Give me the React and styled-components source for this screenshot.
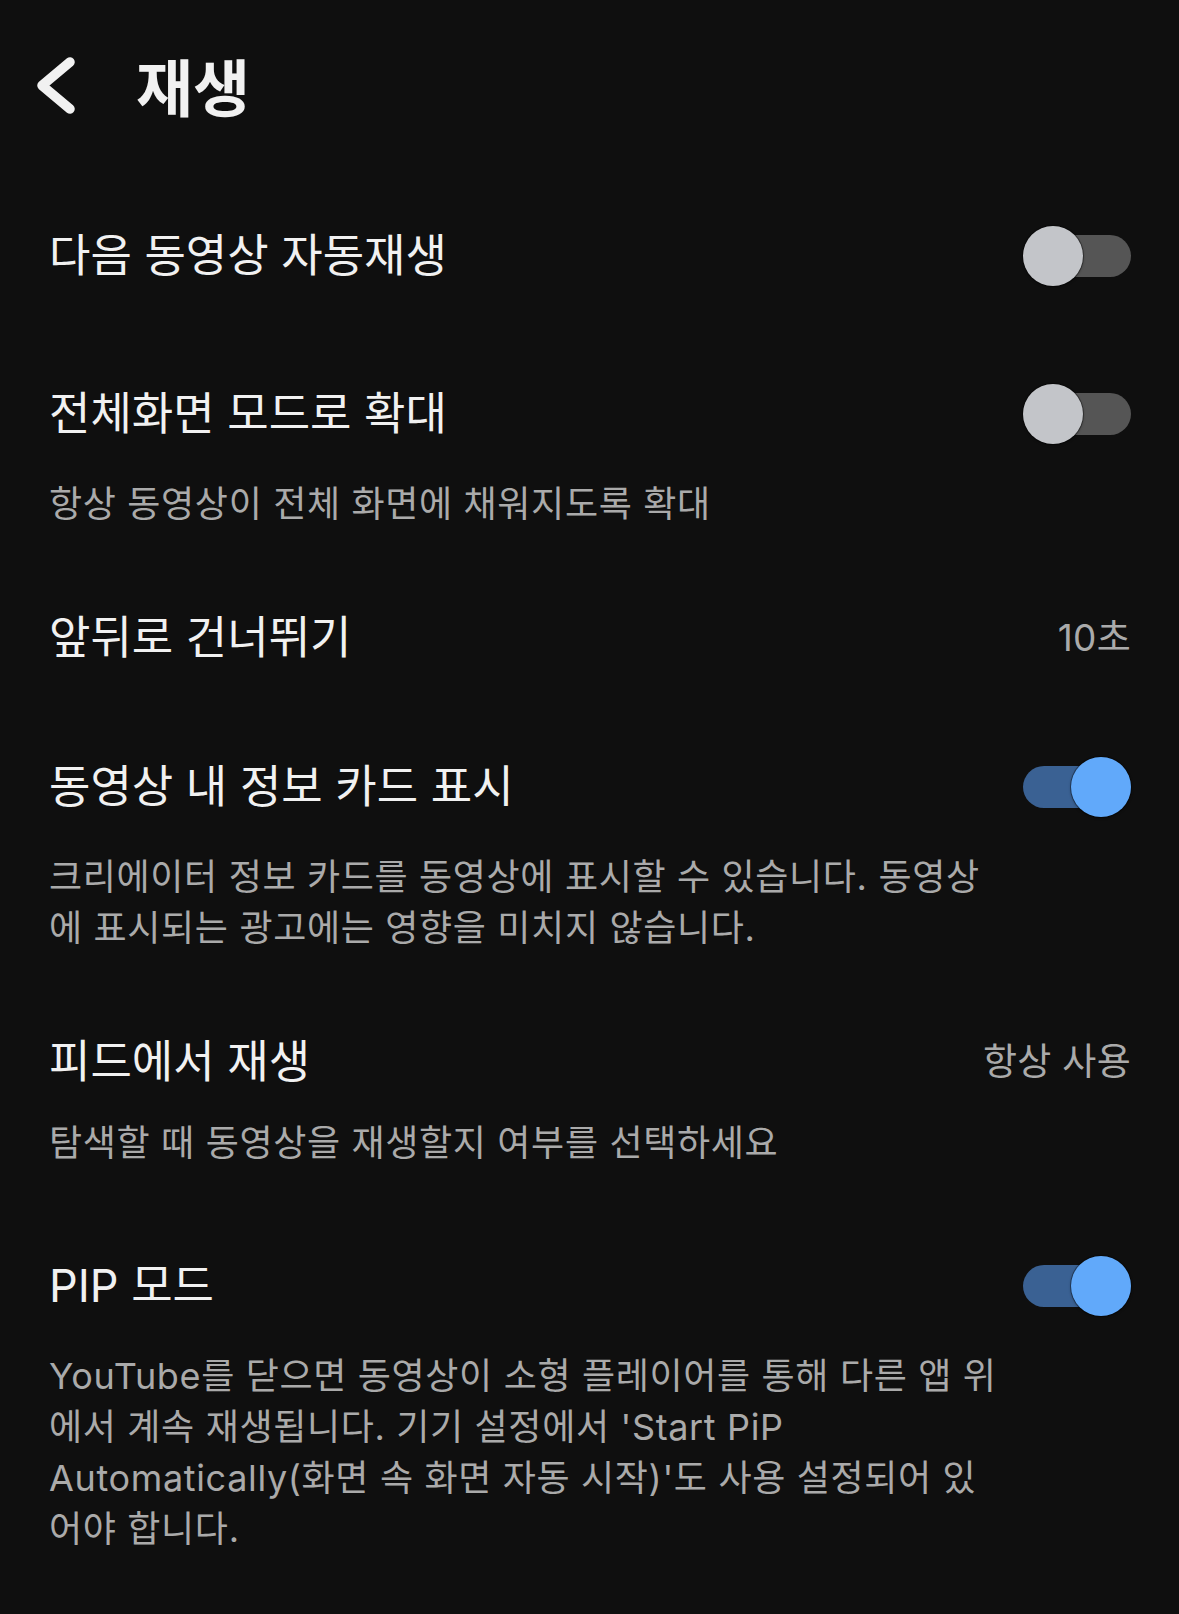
import React from "react";
import styled, { createGlobalStyle } from "styled-components";

const GlobalStyle = createGlobalStyle`
  html, body {
    margin: 0;
    padding: 0;
    background: #0f0f0f;
  }
  body {
    font-family: Inter, "Noto Sans CJK KR", "Noto Sans", sans-serif;
    -webkit-font-smoothing: antialiased;
  }
  #root {
    min-height: 1614px;
    background: #0f0f0f;
  }
`;

const Page = styled.div`
  width: 1179px;
  min-height: 1614px;
  background: #0f0f0f;
  color: #f1f1f1;
  display: flex;
  flex-direction: column;
`;

const Header = styled.header`
  display: flex;
  align-items: center;
  gap: 58px;
  height: 60px;
  padding: 55px 0 62px 36px;
`;

const BackButton = styled.button`
  display: flex;
  align-items: center;
  justify-content: center;
  width: 42px;
  height: 60px;
  padding: 0;
  border: none;
  background: transparent;
  color: #f1f1f1;
  cursor: pointer;
`;

const PageTitle = styled.h1`
  margin: 0;
  font-family: "Noto Sans CJK KR", sans-serif;
  font-size: 62px;
  font-weight: 700;
  line-height: 60px;
  color: #f1f1f1;
`;

const List = styled.div`
  display: flex;
  flex-direction: column;
`;

const Item = styled.div`
  display: flex;
  flex-direction: column;
  padding: 49px 48px ${(p) => (p.$hasDesc ? "38px" : "49px")} 49px;
`;

const Head = styled.div`
  display: flex;
  align-items: center;
  justify-content: space-between;
  min-height: ${(p) => (p.$compact ? "42px" : "60px")};
`;

const Title = styled.span`
  font-size: 45px;
  line-height: 42px;
  font-weight: 400;
  color: #f1f1f1;
  white-space: nowrap;
`;

const Value = styled.span`
  font-size: 37px;
  line-height: 42px;
  letter-spacing: 0.3px;
  color: #aaaaaa;
  white-space: nowrap;
`;

const Desc = styled.p`
  margin: 35px 0 0;
  font-size: 36px;
  line-height: 51px;
  letter-spacing: 0.65px;
  color: #aaaaaa;
  white-space: nowrap;
`;

const ToggleWrap = styled.button`
  position: relative;
  flex: none;
  width: 108px;
  height: 60px;
  padding: 0;
  border: none;
  background: transparent;
  cursor: pointer;
`;

const Track = styled.span`
  position: absolute;
  left: 0;
  right: 0;
  top: 9px;
  height: 42px;
  border-radius: 21px;
  background: ${(p) => (p.$on ? "#3a6193" : "#555555")};
`;

const Knob = styled.span`
  position: absolute;
  top: 0;
  left: ${(p) => (p.$on ? "48px" : "0")};
  width: 60px;
  height: 60px;
  border-radius: 50%;
  background: ${(p) => (p.$on ? "#61a9fa" : "#c3c5c9")};
  box-shadow: 0 0 0 1px rgba(0, 0, 0, 0.35), 0 1px 3px rgba(0, 0, 0, 0.4);
`;

function Toggle({ on }) {
  return (
    <ToggleWrap aria-pressed={on}>
      <Track $on={on} />
      <Knob $on={on} />
    </ToggleWrap>
  );
}

const items = [
  { title: "다음 동영상 자동재생", toggle: false },
  {
    title: "전체화면 모드로 확대",
    toggle: false,
    desc: ["항상 동영상이 전체 화면에 채워지도록 확대"],
  },
  { title: "앞뒤로 건너뛰기", value: "10초" },
  {
    title: "동영상 내 정보 카드 표시",
    toggle: true,
    desc: [
      "크리에이터 정보 카드를 동영상에 표시할 수 있습니다. 동영상",
      "에 표시되는 광고에는 영향을 미치지 않습니다.",
    ],
  },
  {
    title: "피드에서 재생",
    value: "항상 사용",
    desc: ["탐색할 때 동영상을 재생할지 여부를 선택하세요"],
  },
  {
    title: "PIP 모드",
    toggle: true,
    desc: [
      "YouTube를 닫으면 동영상이 소형 플레이어를 통해 다른 앱 위",
      "에서 계속 재생됩니다. 기기 설정에서 'Start PiP",
      "Automatically(화면 속 화면 자동 시작)'도 사용 설정되어 있",
      "어야 합니다.",
    ],
  },
];

export default function App() {
  return (
    <>
      <GlobalStyle />
      <Page>
        <Header>
          <BackButton aria-label="뒤로">
            <svg width="42" height="60" viewBox="0 0 42 60" fill="none">
              <path
                d="M34 7 L6 30.5 L34 54"
                stroke="#f1f1f1"
                strokeWidth="9.5"
                strokeLinecap="round"
                strokeLinejoin="round"
              />
            </svg>
          </BackButton>
          <PageTitle>재생</PageTitle>
        </Header>
        <List>
          {items.map((it) => (
            <Item key={it.title} $hasDesc={!!it.desc}>
              <Head $compact={it.value !== undefined}>
                <Title>{it.title}</Title>
                {it.value !== undefined ? (
                  <Value>{it.value}</Value>
                ) : (
                  <Toggle on={it.toggle} />
                )}
              </Head>
              {it.desc && (
                <Desc>
                  {it.desc.map((line, i) => (
                    <React.Fragment key={i}>
                      {i > 0 && <br />}
                      {line}
                    </React.Fragment>
                  ))}
                </Desc>
              )}
            </Item>
          ))}
        </List>
      </Page>
    </>
  );
}
